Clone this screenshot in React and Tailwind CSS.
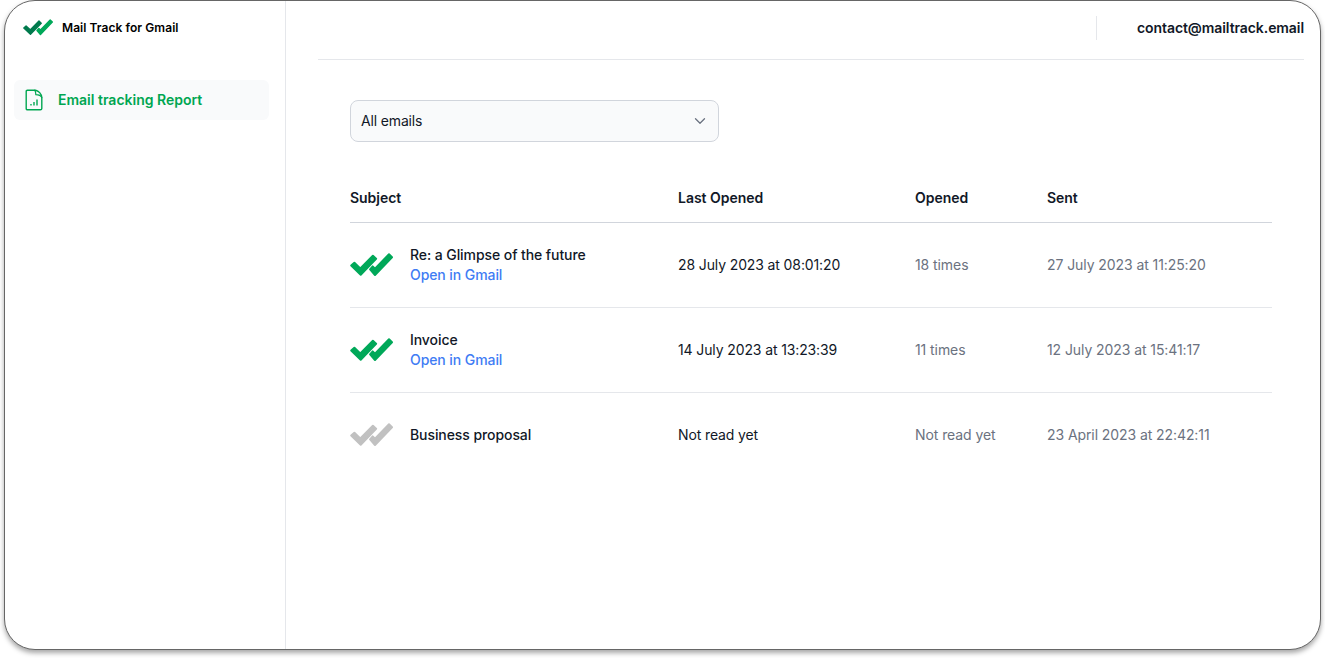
import React from "react";

function DoubleCheck({ className, first, second }) {
  return (
    <svg viewBox="0 0 43 24" className={className} strokeWidth="2" strokeLinejoin="round">
      <path fill={first} stroke={first} d="M1.2 12.6 4.4 9.7 10.3 15.4 22.9 2.8 26.1 5.8 10.7 21.8Z" />
      <path fill={second} stroke={second} d="M20.1 16.4 22.7 13.4 25 15.6 39 1.2 42 4.2 25 22Z" />
    </svg>
  );
}

function ReportIcon() {
  return (
    <svg
      viewBox="0 0 18 22"
      className="h-[22px] w-[18px] shrink-0"
      fill="none"
      stroke="#00a651"
      strokeWidth="1.4"
      strokeLinecap="round"
      strokeLinejoin="round"
    >
      <path d="M2.4 1.2H10.6C13.6 2 16.4 5 16.8 8.4V19.4Q16.8 20.8 15.4 20.8H2.6Q1.2 20.8 1.2 19.4V2.4Q1.2 1.2 2.4 1.2Z" />
      <path d="M9.4 1.2C11 2 10.6 4 10.8 5.6 13.2 5.6 15.8 6 16.8 8.6" strokeWidth="1.2" />
      <path d="M6 15V16.6M9 13V16.6M12 10.4V16.6" strokeWidth="1.4" strokeLinecap="butt" />
    </svg>
  );
}

const emails = [
  {
    subject: "Re: a Glimpse of the future",
    link: true,
    color: "#00a859",
    last: "28 July 2023 at 08:01:20",
    opened: "18 times",
    sent: "27 July 2023 at 11:25:20",
  },
  {
    subject: "Invoice",
    link: true,
    color: "#00a859",
    last: "14 July 2023 at 13:23:39",
    opened: "11 times",
    sent: "12 July 2023 at 15:41:17",
  },
  {
    subject: "Business proposal",
    link: false,
    color: "#c1c1c1",
    last: "Not read yet",
    opened: "Not read yet",
    sent: "23 April 2023 at 22:42:11",
  },
];

const columns = "grid grid-cols-[328px_237px_132px_225px] items-center";

export default function App() {
  return (
    <div className="h-[658px] w-[1325px] overflow-hidden bg-white pl-1 font-['Inter',sans-serif] text-sm text-[#111827]">
      <div className="flex h-[650px] w-[1317px] overflow-hidden rounded-[31px] border border-[#666] bg-white shadow-[0_3px_5px_rgba(0,0,0,0.35)]">
        <aside className="w-[281px] shrink-0 border-r border-gray-200 pr-4 pl-[9px]">
          <div className="flex h-[53px] items-center pl-[9px]">
            <DoubleCheck className="h-[17px] w-[30px]" first="#007a4d" second="#00a859" />
            <span className="ml-[9px] text-xs font-semibold tracking-[0.06px] text-black">Mail Track for Gmail</span>
          </div>
          <nav className="mt-[26px] flex h-10 items-center rounded-md bg-gray-50 pl-[11px]">
            <ReportIcon />
            <span className="ml-[15px] font-semibold text-[#00a651]">Email tracking Report</span>
          </nav>
        </aside>
        <main className="min-w-0 flex-1 pr-4 pl-8">
          <header className="flex h-[59px] items-start justify-end border-b border-gray-200 pt-[15px]">
            <div className="flex h-6 items-center border-l border-gray-200 pl-10 font-semibold tracking-[-0.08px]">
              contact@mailtrack.email
            </div>
          </header>
          <div className="px-8 pt-10">
            <div className="flex h-[42px] w-[369px] items-center justify-between rounded-lg border border-gray-300 bg-gray-50 pr-3 pl-2.5">
              <span className="tracking-[-0.15px]">All emails</span>
              <svg viewBox="0 0 12 8" className="h-2 w-3" fill="none" stroke="#6b7280" strokeWidth="1.3" strokeLinecap="round" strokeLinejoin="round">
                <path d="M1.5 1.8 6 6.2 10.5 1.8" />
              </svg>
            </div>
            <div className={`${columns} mt-8 h-[49px] border-b border-gray-300 font-semibold tracking-[-0.03px]`}>
              <span>Subject</span>
              <span>Last Opened</span>
              <span>Opened</span>
              <span>Sent</span>
            </div>
            <div>
              {emails.map((email) => (
                <div
                  key={email.subject}
                  className={`${columns} h-[85px] border-b border-gray-200 last:border-transparent`}
                >
                  <div className="flex items-center">
                    <DoubleCheck className="h-6 w-[43px] shrink-0" first={email.color} second={email.color} />
                    <div className="ml-[17px] font-medium tracking-[-0.08px]">
                      <div>{email.subject}</div>
                      {email.link && <div className="text-[#3f7cf4]">Open in Gmail</div>}
                    </div>
                  </div>
                  <span className="tracking-[-0.12px]">{email.last}</span>
                  <span className="tracking-[-0.08px] text-[#6b7280]">{email.opened}</span>
                  <span className="tracking-[-0.08px] text-[#6b7280]">{email.sent}</span>
                </div>
              ))}
            </div>
          </div>
        </main>
      </div>
    </div>
  );
}
